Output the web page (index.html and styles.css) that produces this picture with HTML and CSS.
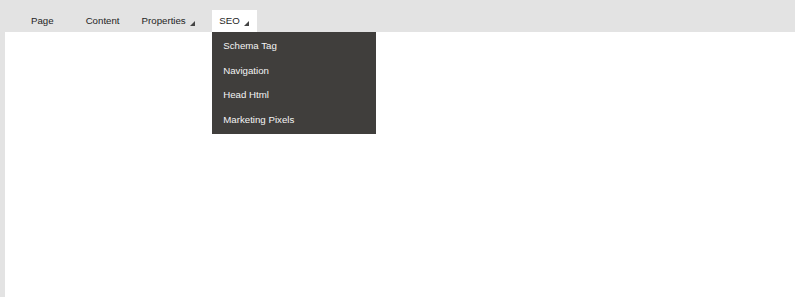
FILE: index.html
```html
<!DOCTYPE html>
<html lang="en">
<head>
  <meta charset="UTF-8" />
  <title>Editor</title>
  <link rel="stylesheet" href="styles.css">
</head>
<body>

  <!-- Tab bar -->
  <nav class="tabs">
    <a class="tab tab-page">Page</a>
    <a class="tab">Content</a>
    <a class="tab tab-menu">Properties <svg class="caret" width="5" height="5" viewBox="0 0 5 5"><polygon points="0,5 5,5 5,0" /></svg></a>
    <div class="tab tab-menu tab-open">
      SEO <svg class="caret" width="5" height="5" viewBox="0 0 5 5"><polygon points="0,5 5,5 5,0" /></svg>
      <ul class="dropdown">
        <li>Schema Tag</li>
        <li>Navigation</li>
        <li>Head Html</li>
        <li>Marketing Pixels</li>
      </ul>
    </div>
  </nav>

  <div class="content"></div>

</body>
</html>
```

FILE: styles.css
```css
body {
  font-family: 'Liberation Sans', Arial, Helvetica, sans-serif;
  font-size: 9.7px;
  background: #e3e3e3;
  color: #1e1e1e;
  margin: 0;
  height: 100vh;
  display: flex;
  flex-direction: column;
}
.tabs {
  height: 32px;
  display: flex;
  align-items: flex-end;
  gap: 8px;
  padding-left: 24px;
  box-sizing: border-box;
  flex-shrink: 0;
}
.tab {
  position: relative;
  height: 22px;
  line-height: 22px;
  padding: 0 7px;
  display: flex;
  align-items: center;
  gap: 4.5px;
  cursor: pointer;
}
.tab-page {
  margin-right: 10px;
}
.tab-menu {
  padding-right: 9px;
}
.tab-open {
  background: white;
  padding-right: 8px;
}
.caret {
  fill: #444;
  margin-top: 4px;
}
.dropdown {
  position: absolute;
  top: 100%;
  left: 0;
  width: 164px;
  margin: 0;
  padding: 1px 0 3px;
  list-style: none;
  background: #403e3c;
  color: #f4f4f4;
  z-index: 2;
}
.dropdown li {
  height: 24.5px;
  line-height: 25.5px;
  padding-left: 11px;
}
.content {
  flex: 1;
  margin-left: 5px;
  background: white;
}
```
